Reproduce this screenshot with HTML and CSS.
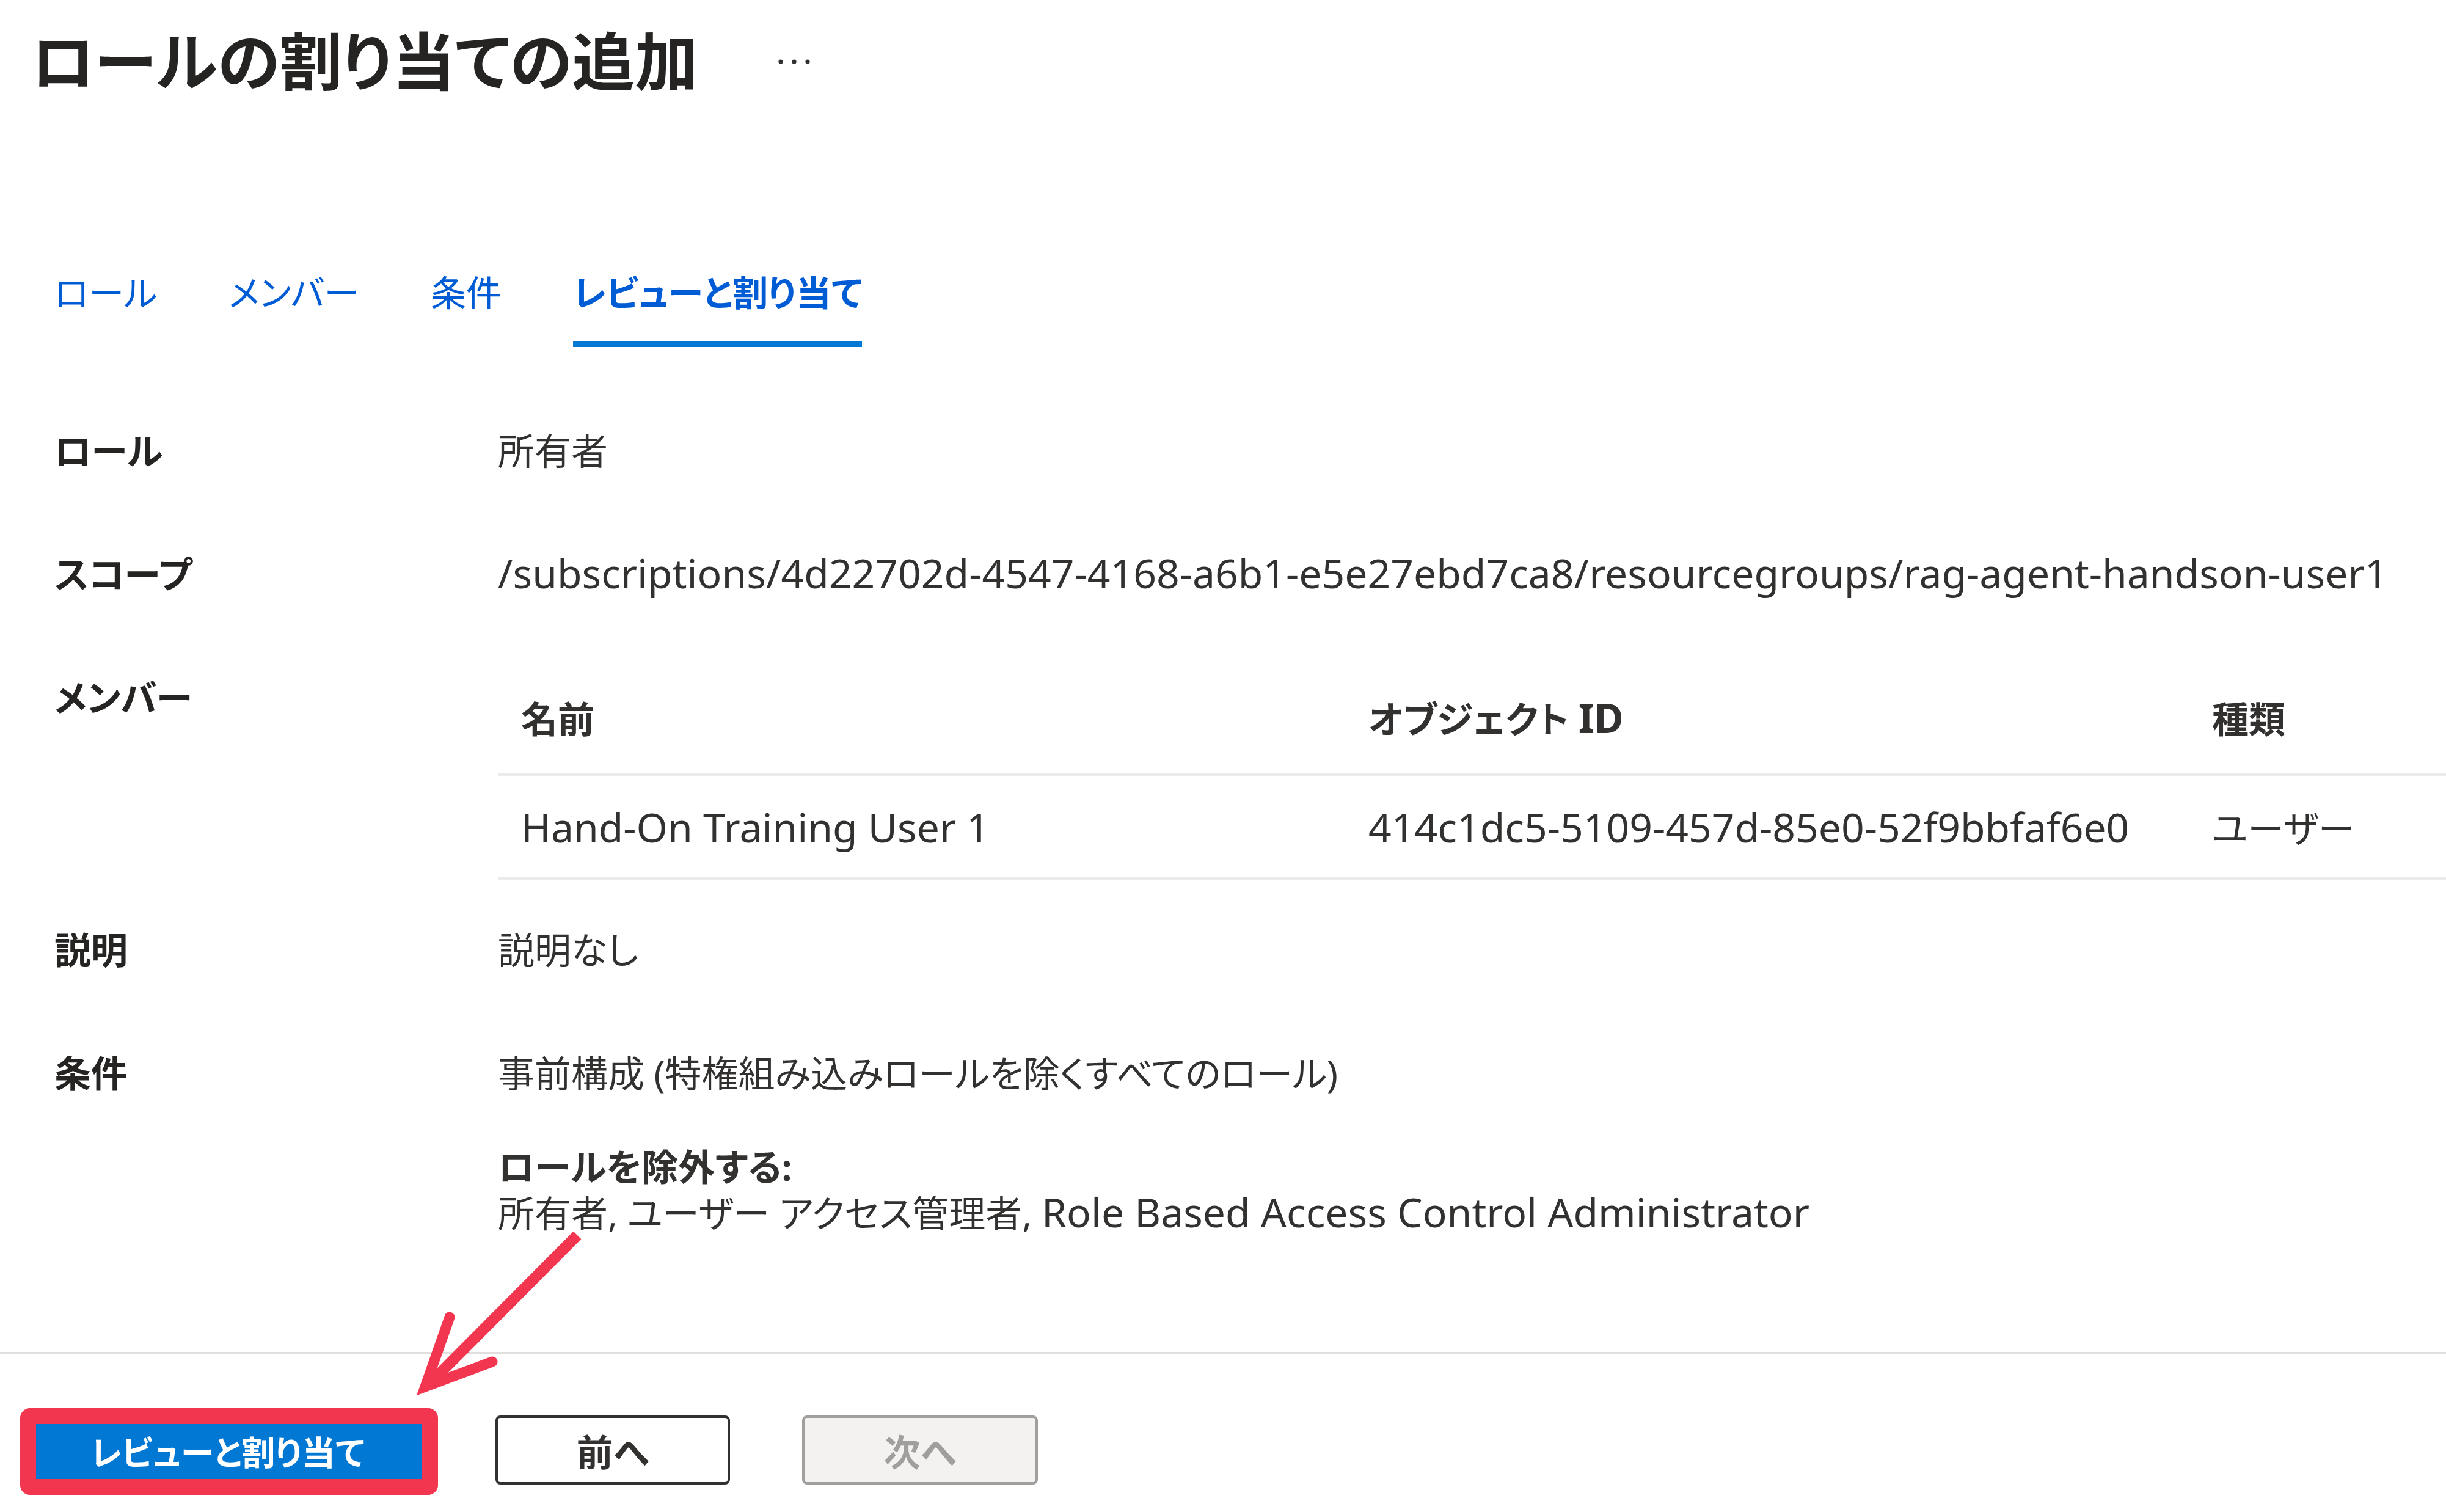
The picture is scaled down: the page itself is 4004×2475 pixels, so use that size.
FILE: index.html
```html
<!DOCTYPE html>
<html lang="ja">
<head>
<meta charset="utf-8">
<title>ロールの割り当ての追加</title>
<link rel="stylesheet" href="styles.css">
</head>
<body>
<div class="page">
  <header class="page-header">
    <h1 class="page-title">ロールの割り当ての追加</h1>
    <span class="more" aria-label="その他">
      <svg width="52" height="10" viewBox="0 0 52 10"><circle cx="4" cy="5" r="3.6"/><circle cx="26" cy="5" r="3.6"/><circle cx="48" cy="5" r="3.6"/></svg>
    </span>
  </header>

  <nav class="tabs">
    <span class="tab">ロール</span>
    <span class="tab">メンバー</span>
    <span class="tab">条件</span>
    <span class="tab active">レビューと割り当て</span>
  </nav>

  <section class="details">
    <div class="row">
      <div class="label">ロール</div>
      <div class="value">所有者</div>
    </div>
    <div class="row">
      <div class="label">スコープ</div>
      <div class="value nowrap"><span class="en">/subscriptions/4d22702d-4547-4168-a6b1-e5e27ebd7ca8/resourcegroups/rag-agent-handson-user1</span></div>
    </div>
    <div class="row row-members">
      <div class="label">メンバー</div>
      <div class="value">
        <table class="members">
          <colgroup><col class="c1"><col class="c2"><col class="c3"></colgroup>
          <thead>
            <tr><th>名前</th><th>オブジェクト <span class="en">ID</span></th><th>種類</th></tr>
          </thead>
          <tbody>
            <tr><td><span class="en">Hand-On Training User 1</span></td><td><span class="en">414c1dc5-5109-457d-85e0-52f9bbfaf6e0</span></td><td>ユーザー</td></tr>
          </tbody>
        </table>
      </div>
    </div>
    <div class="row">
      <div class="label">説明</div>
      <div class="value">説明なし</div>
    </div>
    <div class="row row-last">
      <div class="label">条件</div>
      <div class="value">
        <div>事前構成 (特権組み込みロールを除くすべてのロール)</div>
        <div class="exclude">
          <div class="exclude-title">ロールを除外する:</div>
          <div>所有者, ユーザー アクセス管理者, <span class="en">Role Based Access Control Administrator</span></div>
        </div>
      </div>
    </div>
  </section>

  <footer class="footer">
    <div class="btn btn-primary">レビューと割り当て<span class="highlight"></span></div>
    <div class="btn btn-secondary">前へ</div>
    <div class="btn btn-disabled">次へ</div>
  </footer>

  <svg class="arrow" width="320" height="300" viewBox="0 0 320 300">
    <path d="M285 22 L44 264" fill="none" stroke="#f3364f" stroke-width="18"/>
    <path d="M76 156 L36 270 L146 229" fill="none" stroke="#f3364f" stroke-width="17" stroke-linecap="round" stroke-linejoin="miter" stroke-miterlimit="10"/>
  </svg>
</div>
</body>
</html>
```

FILE: styles.css
```css
html, body {
  margin: 0;
  padding: 0;
  background: #ffffff;
}

body {
  font-family: "Noto Sans", "Noto Sans CJK JP", sans-serif;
  font-feature-settings: "palt";
  color: #323130;
  font-size: 60px;
}

.page {
  position: relative;
  width: 4004px;
  height: 2475px;
  overflow: hidden;
}

.en {
  font-size: 66px;
  line-height: 1;
}

.page-header {
  display: flex;
  align-items: center;
  padding: 38px 0 0 51px;
  height: 125px;
}

.page-title {
  margin: 0;
  font-size: 103px;
  line-height: 125px;
  font-weight: 700;
  color: #252423;
}

.more {
  display: flex;
  margin-left: 132px;
  fill: #323130;
}

.tabs {
  display: flex;
  gap: 117px;
  margin: 274px 0 0 89px;
}

.tab {
  font-size: 58px;
  line-height: 84px;
  color: #005cd4;
  padding-bottom: 37px;
  border-bottom: 10px solid transparent;
}

.tab.active {
  font-weight: 700;
  border-bottom-color: #0078d4;
}

.details {
  margin-top: 69px;
  padding-left: 89px;
}

.row {
  display: grid;
  grid-template-columns: 726px 1fr;
  padding: 56px 0;
  line-height: 90px;
}

.row-members {
  padding-bottom: 14px;
}

.row-last {
  padding-bottom: 0;
}

.label {
  font-weight: 700;
  color: #252423;
}

.nowrap {
  white-space: nowrap;
}

.members {
  width: 100%;
  border-collapse: collapse;
  table-layout: fixed;
}

.members .c1 { width: 1387px; }
.members .c2 { width: 1381px; }

.members th {
  text-align: left;
  font-weight: 700;
  padding: 35px 0 44px 38px;
  border-bottom: 4px solid #edebe9;
  white-space: nowrap;
}

.members td {
  padding: 41px 0 35px 38px;
  border-bottom: 4px solid #edebe9;
  white-space: nowrap;
}

.exclude {
  margin-top: 70px;
  line-height: 76px;
}

.exclude-title {
  font-weight: 700;
}

.footer {
  display: flex;
  gap: 118px;
  margin-top: 189px;
  border-top: 4px solid #e1dfdd;
  padding: 100px 0 0 52px;
}

.btn {
  box-sizing: border-box;
  height: 113px;
  border: 4px solid;
  border-radius: 8px;
  display: flex;
  align-items: center;
  justify-content: center;
  font-size: 60px;
  font-weight: 700;
}

.btn-primary {
  position: relative;
  width: 641px;
  background: #0078d4;
  border-color: #0078d4;
  color: #ffffff;
  font-size: 55px;
}

.btn-secondary {
  width: 384px;
  background: #ffffff;
  border-color: #323130;
  color: #323130;
}

.btn-disabled {
  width: 386px;
  background: #f3f2f1;
  border-color: #a19f9d;
  color: #a19f9d;
}

.highlight {
  position: absolute;
  left: -23px;
  top: -16px;
  width: 684px;
  height: 142px;
  box-sizing: border-box;
  border: 26px solid #f3364f;
  border-radius: 16px;
}

.arrow {
  position: absolute;
  left: 660px;
  top: 2000px;
}
```
